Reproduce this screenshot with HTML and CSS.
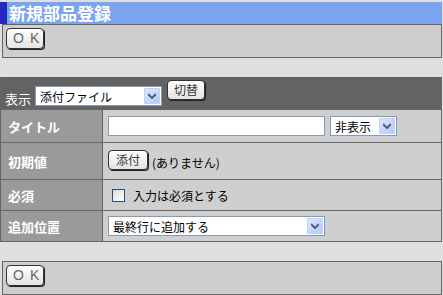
FILE: index.html
```html
<!DOCTYPE html>
<html lang="ja">
  <head>
    <meta charset="UTF-8" />
    <title>新規部品登録</title>
    <link rel="stylesheet" href="styles.css">
  </head>
  <body>
    <h1 class="page-title">新規部品登録</h1>

    <div class="btn-box">
      <button class="btn ok-btn">OK</button>
    </div>

    <div class="part-form">
      <div class="form-head">
        <span class="head-label">表示</span>
        <span class="select-wrap type-select">
          <select>
            <option>添付ファイル</option>
          </select>
          <span class="select-arrow"><svg width="8" height="6" viewBox="0 0 8 6"><path d="M0 1 L4 5 L8 1" fill="none" stroke="#4d5f80" stroke-width="2"/></svg></span>
        </span>
        <button class="btn small-btn switch-btn">切替</button>
      </div>

      <div class="form-row row-title">
        <div class="row-label">タイトル</div>
        <div class="row-value">
          <input type="text" class="text-input" />
          <span class="select-wrap show-select">
            <select>
              <option>非表示</option>
            </select>
            <span class="select-arrow"><svg width="8" height="6" viewBox="0 0 8 6"><path d="M0 1 L4 5 L8 1" fill="none" stroke="#4d5f80" stroke-width="2"/></svg></span>
          </span>
        </div>
      </div>

      <div class="form-row row-default">
        <div class="row-label">初期値</div>
        <div class="row-value">
          <button class="btn small-btn attach-btn">添付</button>
          <span class="note">(ありません)</span>
        </div>
      </div>

      <div class="form-row row-required">
        <div class="row-label">必須</div>
        <div class="row-value">
          <input type="checkbox" id="required" class="check" />
          <label for="required">入力は必須とする</label>
        </div>
      </div>

      <div class="form-row row-position">
        <div class="row-label">追加位置</div>
        <div class="row-value">
          <span class="select-wrap pos-select">
            <select>
              <option>最終行に追加する</option>
            </select>
            <span class="select-arrow"><svg width="8" height="6" viewBox="0 0 8 6"><path d="M0 1 L4 5 L8 1" fill="none" stroke="#4d5f80" stroke-width="2"/></svg></span>
          </span>
        </div>
      </div>
    </div>

    <div class="btn-box bottom-box">
      <button class="btn ok-btn">OK</button>
    </div>
  </body>
</html>
```

FILE: styles.css
```css
body {
  margin: 0;
  background-color: #dfdfdf;
  font-family: "Noto Sans CJK JP", "DejaVu Sans", sans-serif;
  font-size: 12px;
  color: #000;
}

.page-title {
  margin: 2px 0 0 0;
  width: 442px;
  height: 22px;
  box-sizing: border-box;
  padding-left: 2px;
  border-left: 7px solid #2727c2;
  background-color: #7aa5ee;
  color: #fff;
  font-size: 17px;
  font-weight: bold;
  line-height: 22px;
}

.btn-box {
  margin-left: 2px;
  width: 440px;
  height: 34px;
  box-sizing: border-box;
  border: 1px solid #666;
  background-color: #cecece;
  padding: 3px 0 0 3px;
}

.bottom-box {
  margin-top: 19px;
}

.btn {
  font-family: "Liberation Sans", sans-serif;
  background: linear-gradient(#ffffff, #e4e4e4);
  border: 1px solid #333;
  border-radius: 4px;
  box-shadow: 1px 1px 0 #222;
  padding: 0;
  cursor: pointer;
}

.ok-btn {
  width: 38px;
  height: 21px;
  color: #666;
  font-size: 14px;
  font-weight: 300;
  letter-spacing: 6px;
  text-indent: 6px;
  line-height: 19px;
}

.small-btn {
  height: 20px;
  font-family: "Noto Sans CJK JP", sans-serif;
  font-size: 12px;
  color: #333;
  line-height: 18px;
}

.part-form {
  margin-top: 19px;
  width: 442px;
  box-sizing: border-box;
  border: 1px solid #666;
  border-top: none;
}

.form-head {
  height: 32px;
  background-color: #636363;
  display: flex;
  align-items: flex-start;
}

.head-label {
  color: #fff;
  font-size: 13px;
  margin: 14px 0 0 4px;
  line-height: 15px;
}

.type-select {
  margin: 9px 0 0 4px;
  width: 127px;
}

.switch-btn {
  width: 38px;
  margin: 3px 0 0 5px;
}

.form-row {
  display: flex;
  border-top: 1px solid #666;
}

.row-title {
  height: 32px;
}

.row-default {
  height: 36px;
}

.row-required,
.row-position {
  height: 30px;
}

.row-label {
  width: 102px;
  flex-shrink: 0;
  box-sizing: border-box;
  border-right: 1px solid #666;
  background-color: #9a9a9a;
  color: #fff;
  font-size: 13px;
  font-weight: bold;
  padding-left: 7px;
  display: flex;
  align-items: center;
}

.row-value {
  flex: 1;
  background-color: #cfcfcf;
  padding-left: 5px;
  display: flex;
  align-items: center;
}

.text-input {
  width: 217px;
  height: 20px;
  box-sizing: border-box;
  border: 1px solid #7f9db9;
  background: #fff;
  margin: 0;
}

.select-wrap {
  position: relative;
  display: inline-block;
  height: 20px;
}

.select-wrap select {
  appearance: none;
  width: 100%;
  height: 20px;
  box-sizing: border-box;
  border: 1px solid #7f9db9;
  background: #fff;
  font-family: "Noto Sans CJK JP", sans-serif;
  font-size: 12px;
  padding: 0 0 0 4px;
  margin: 0;
  color: #000;
}

.select-arrow {
  position: absolute;
  top: 2px;
  right: 2px;
  width: 16px;
  height: 16px;
  box-sizing: border-box;
  background: linear-gradient(135deg, #dbe6ff, #b6c9f5);
  border: 1px solid #c3d3f7;
  display: flex;
  align-items: center;
  justify-content: center;
}

.show-select {
  width: 67px;
  margin-left: 5px;
}

.pos-select {
  width: 217px;
}

.attach-btn {
  width: 40px;
  margin-top: -2px;
}

.note {
  margin-left: 4px;
  margin-top: 3px;
}

.check {
  appearance: none;
  width: 13px;
  height: 13px;
  box-sizing: border-box;
  border: 1px solid #1c5180;
  background: linear-gradient(135deg, #dcdcd7, #ffffff);
  margin: 0 0 0 4px;
}

.row-required label {
  margin-left: 8px;
}
```
